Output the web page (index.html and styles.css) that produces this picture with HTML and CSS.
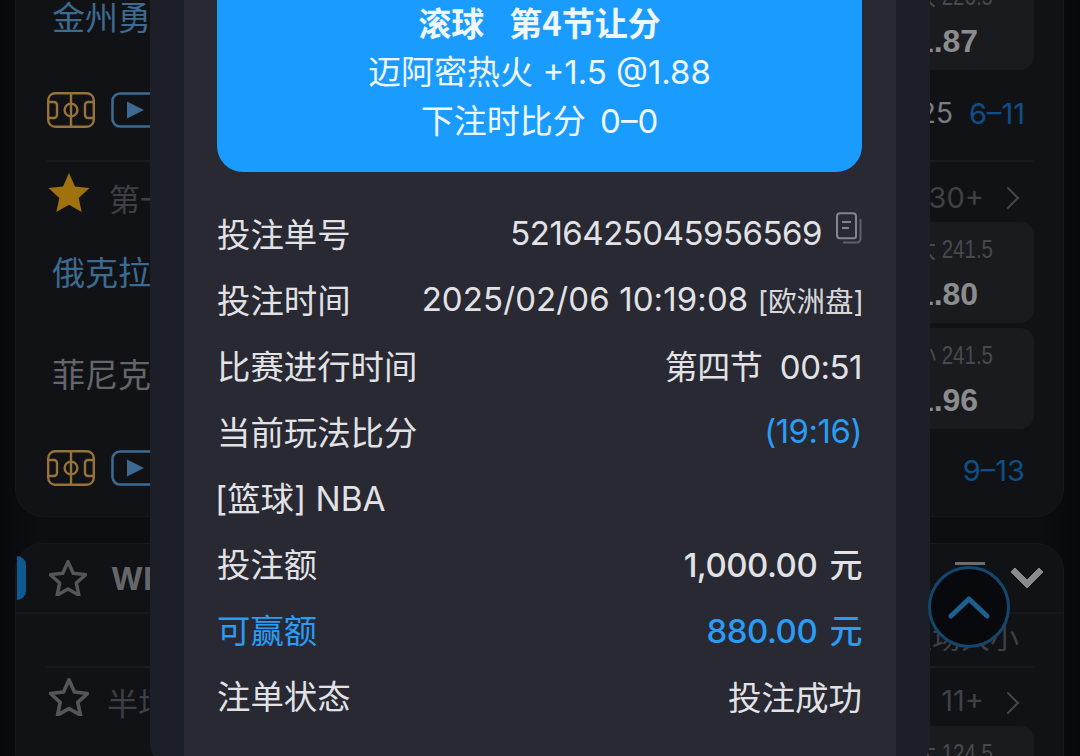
FILE: index.html
```html
<!DOCTYPE html>
<html>
<head>
    <meta charset="utf-8">
    <link rel="stylesheet" href="styles.css">
</head>
<body>
    <svg class="svg-defs" width="0" height="0">
        <defs>
            <symbol id="court" viewBox="0 0 48 36">
                <rect x="1.2" y="1.2" width="45.6" height="33.6" rx="7" fill="none" stroke="currentColor" stroke-width="2.4"/>
                <path d="M24 1v34M1 10h6a3 3 0 0 1 3 3v10a3 3 0 0 1-3 3H1M47 10h-6a3 3 0 0 0-3 3v10a3 3 0 0 0 3 3h6" fill="none" stroke="currentColor" stroke-width="2.4"/>
                <circle cx="24" cy="18" r="6.4" fill="none" stroke="currentColor" stroke-width="2.4"/>
            </symbol>
            <symbol id="play" viewBox="0 0 40 36">
                <path d="M40 1.5H9A7.5 7.5 0 0 0 1.5 9v18A7.5 7.5 0 0 0 9 34.500h31" fill="none" stroke="currentColor" stroke-width="2.6"/>
                <path d="M16 9.500l17 8.500-17 8.500z" fill="currentColor"/>
            </symbol>
            <symbol id="star" viewBox="0 0 44 42">
                <path d="M22 2l6 13.500 14.500 1.600-10.800 9.800 3 14.100L22 33.800 9.300 41l3-14.100L1.500 17.100 16 15.500z" stroke-linejoin="round"/>
            </symbol>
        </defs>
    </svg>

    <div class="page">
        <section class="card card-top">
            <div class="game-row game-row-first">
                <span class="team team-blue">金州勇士</span>
                <div class="odds">
                    <span class="odds-head">大 226.5</span>
                    <span class="odds-value">1.87</span>
                </div>
            </div>
            <div class="meta-row">
                <svg class="icon-court"><use href="#court"/></svg>
                <svg class="icon-play"><use href="#play"/></svg>
                <span class="meta-score">25</span>
                <span class="meta-blue">6–11</span>
            </div>
            <div class="divider"></div>
            <div class="match-head">
                <svg class="star star-gold"><use href="#star"/></svg>
                <span class="match-time">第一节</span>
                <span class="match-more">30+</span>
                <span class="chevron-right"></span>
            </div>
            <div class="game-row">
                <span class="team team-blue">俄克拉荷马城雷霆</span>
                <div class="odds">
                    <span class="odds-head">大 241.5</span>
                    <span class="odds-value">1.80</span>
                </div>
            </div>
            <div class="game-row">
                <span class="team team-grey">菲尼克斯太阳</span>
                <div class="odds">
                    <span class="odds-head">小 241.5</span>
                    <span class="odds-value">1.96</span>
                </div>
            </div>
            <div class="meta-row meta-row-last">
                <svg class="icon-court"><use href="#court"/></svg>
                <svg class="icon-play"><use href="#play"/></svg>
                <span class="meta-blue">9–13</span>
            </div>
        </section>

        <section class="card card-bottom">
            <div class="league-head">
                <span class="league-tab"></span>
                <svg class="star star-line league-star"><use href="#star"/></svg>
                <span class="league-name">WNBA</span>
                <span class="league-mark"></span>
                <span class="chevron-down"></span>
            </div>
            <div class="market-row">主场大小</div>
            <div class="divider"></div>
            <div class="match-head match-head-low">
                <svg class="star star-line"><use href="#star"/></svg>
                <span class="match-time">半场</span>
                <span class="match-more">11+</span>
                <span class="chevron-right"></span>
            </div>
            <div class="game-row">
                <div class="odds">
                    <span class="odds-head">大 124.5</span>
                </div>
            </div>
        </section>
    </div>

    <div class="modal">
        <div class="modal-inner">
            <div class="bet-banner">
                <div class="banner-title">滚球&nbsp; 第4节让分</div>
                <div class="banner-line">迈阿密热火 +1.5 @1.88</div>
                <div class="banner-line banner-score">下注时比分 0–0</div>
            </div>
            <div class="rows">
                <div class="row">
                    <span>投注单号</span>
                    <span class="value"><span>5216425045956569</span><svg class="icon-copy" viewBox="0 0 26 32">
                            <path d="M5 1.200h12a3 3 0 0 1 3 3v20a2 2 0 0 1-2 2H4a3 3 0 0 1-3-3V4.200a3 3 0 0 1 3-3z" fill="none" stroke="#83858c" stroke-width="2"/>
                            <path d="M6 10h9M6 16h7" stroke="#83858c" stroke-width="2"/>
                            <path d="M24.500 7v20a3.500 3.500 0 0 1-3.500 3.500H7" fill="none" stroke="#5f616a" stroke-width="2"/>
                        </svg></span>
                </div>
                <div class="row">
                    <span>投注时间</span>
                    <span class="value value-time">2025/02/06 10:19:08 <small>[欧洲盘]</small></span>
                </div>
                <div class="row">
                    <span>比赛进行时间</span>
                    <span class="value">第四节&nbsp; 00:51</span>
                </div>
                <div class="row">
                    <span>当前玩法比分</span>
                    <span class="value value-blue">(19:16)</span>
                </div>
                <div class="row row-league">
                    <span>[篮球] NBA</span>
                </div>
                <div class="row">
                    <span>投注额</span>
                    <span class="value value-strong">1,000.00 元</span>
                </div>
                <div class="row row-blue">
                    <span>可赢额</span>
                    <span class="value value-strong">880.00 元</span>
                </div>
                <div class="row">
                    <span>注单状态</span>
                    <span class="value value-status">投注成功</span>
                </div>
            </div>
        </div>
    </div>

    <button class="to-top">
        <svg width="44" height="26" viewBox="0 0 44 26"><path d="M4 22L22 5l18 17" fill="none" stroke="#1d5f8f" stroke-width="5" stroke-linecap="round" stroke-linejoin="round"/></svg>
    </button>
</body>
</html>
```

FILE: styles.css
```css
* {
    box-sizing: border-box;
}
html {
    overflow: hidden;
}
body {
    margin: 0;
    height: 756px;
    overflow: hidden;
    position: relative;
    background: linear-gradient(90deg, #08090c 0, #0d0e12 40px, #0d0e12 1040px, #07080b 1080px);
    font-family: Inter, "Noto Sans CJK SC", sans-serif;
}
.svg-defs {
    position: absolute;
}
.page {
    margin-top: -40px;
    padding: 0 16px 0 15px;
}
.card {
    background: #111216;
    border: 1px solid #17181d;
    border-radius: 28px;
    padding: 0 30px 0 31px;
}
.card-top {
    height: 557px;
    margin-bottom: 26px;
}
.card-bottom {
    height: 250px;
}
.game-row {
    display: flex;
    align-items: flex-start;
    justify-content: space-between;
    height: 106px;
}
.game-row-first {
    height: 109px;
    align-items: flex-end;
}
.game-row-first .team {
    margin-bottom: 0;
}
.team {
    align-self: center;
    margin-left: 5px;
    margin-bottom: 8px;
    font-size: 33px;
    white-space: nowrap;
}
.team-blue {
    color: #3d6a8f;
}
.team-grey {
    margin-bottom: 16px;
    color: #64666b;
}
.odds {
    width: 174px;
    height: 101px;
    margin-left: auto;
    margin-right: -1px;
    background: #1a1b1f;
    border-radius: 14px;
    display: flex;
    flex-direction: column;
    align-items: center;
    font-family: "Liberation Sans", "Noto Sans CJK SC", sans-serif;
    white-space: nowrap;
}
.odds-head {
    margin-top: 12px;
    margin-left: 14px;
    font-size: 25px;
    line-height: 30px;
    color: #48494d;
    transform: scaleX(.82);
}
.odds-value {
    margin-top: 10px;
    font-size: 32px;
    line-height: 40px;
    font-weight: 700;
    color: #8c8c8e;
}
.meta-row {
    display: flex;
    align-items: center;
    gap: 16px;
    height: 90px;
    padding-bottom: 10px;
}
.meta-row-last {
    height: 68px;
    padding-bottom: 0;
}
.icon-court {
    width: 48px;
    height: 36px;
    color: #97723a;
}
.icon-play {
    width: 40px;
    height: 36px;
    color: #3d6a90;
}
.meta-score {
    margin-left: auto;
    margin-top: 6px;
    font-size: 28px;
    color: #7d7e81;
}
.meta-blue {
    margin-left: auto;
    margin-top: 6px;
    margin-right: 8px;
    font-size: 29px;
    color: #0f4f85;
}
.meta-row-last .meta-blue {
    margin-top: 4px;
}
.meta-score + .meta-blue {
    margin-left: 0;
}
.divider {
    height: 2px;
    background: #1a1b20;
}
.match-head {
    display: flex;
    align-items: center;
    height: 60px;
}
.match-head-low {
    height: 58px;
}
.match-head-low .match-time {
    margin-top: 8px;
}
.match-head-low .match-more {
    margin-top: 6px;
}
.star {
    width: 44px;
    height: 42px;
    margin-right: 18px;
}
.star-gold {
    fill: #a0720f;
}
.star-line {
    fill: none;
    stroke: #55565a;
    stroke-width: 4;
    width: 40px;
    height: 38px;
    margin-left: 2px;
}
.match-time {
    margin-top: 10px;
    font-size: 31px;
    color: #3f4045;
}
.match-more {
    margin-left: auto;
    margin-top: 10px;
    margin-right: 16px;
    font-size: 29px;
    color: #404145;
}
.chevron-right {
    width: 16px;
    height: 16px;
    margin-top: 12px;
    margin-right: 17px;
    border-top: 2px solid #47484c;
    border-right: 2px solid #47484c;
    transform: rotate(45deg);
}
.league-head {
    position: relative;
    display: flex;
    align-items: center;
    height: 70px;
    margin: 0 -30px 0 -31px;
    padding: 0 35px 0 33px;
    border-bottom: 2px solid #17181d;
}
.league-tab {
    position: absolute;
    left: 1px;
    top: 12px;
    width: 9px;
    height: 44px;
    background: #0f5a92;
    border-radius: 0 10px 10px 0;
}
.league-star {
    width: 38px;
    height: 36px;
    margin-right: 24px;
    margin-left: 0;
}
.league-name {
    font-size: 31px;
    font-weight: 700;
    color: #66676a;
}
.league-mark {
    margin-left: auto;
    margin-right: 30px;
    width: 30px;
    height: 3px;
    margin-top: -30px;
    background: #6b6c70;
}
.chevron-down {
    width: 24px;
    height: 24px;
    margin-top: -12px;
    margin-right: -11px;
    border-right: 7px solid #8a8a8c;
    border-bottom: 7px solid #8a8a8c;
    border-radius: 2px;
    transform: rotate(45deg);
}
.market-row {
    height: 52px;
    padding-right: 14px;
    text-align: right;
    font-size: 29px;
    line-height: 50px;
    color: #3f4045;
}
.modal {
    position: absolute;
    left: 150px;
    top: -40px;
    width: 780px;
    height: 812px;
    padding: 0 34px;
    background: #1c1f27;
    border-radius: 30px;
}
.modal-inner {
    height: 100%;
    padding: 0 34px 0 33px;
    background: #282933;
}
.bet-banner {
    height: 212px;
    padding-top: 37px;
    background: #1a9cff;
    border-radius: 0 0 26px 26px;
    text-align: center;
    color: #eef6ff;
}
.banner-title {
    font-size: 33px;
    font-weight: 700;
    line-height: 51px;
    word-spacing: 5px;
    font-family: "Noto Sans CJK SC", sans-serif;
}
.banner-line {
    font-size: 33px;
    line-height: 49px;
}
.banner-score {
    word-spacing: 5px;
}
.rows {
    padding-top: 27px;
}
.row {
    display: flex;
    align-items: center;
    justify-content: space-between;
    height: 66px;
    font-size: 33.400px;
    color: #e2e2e5;
    white-space: nowrap;
}
.row-league {
    margin-left: -2px;
}
.value {
    display: flex;
    align-items: center;
    margin-top: 2px;
    font-size: 33px;
    letter-spacing: -.5px;
    white-space: pre;
}
.value-time {
    letter-spacing: .1px;
}
.value small {
    margin-right: -2px;
    font-size: 28.500px;
    letter-spacing: 0;
    color: #d8d8db;
}
.value-blue {
    color: #2a9cf4;
}
.value-strong {
    font-weight: 500;
    word-spacing: 4px;
}
.value-status {
    font-size: 33.500px;
    letter-spacing: 0;
}
.row-blue {
    color: #2a9cf4;
}
.icon-copy {
    width: 26px;
    height: 32px;
    margin: -10px 0 0 14px;
}
.to-top {
    position: absolute;
    left: 928px;
    top: 566px;
    width: 82px;
    height: 82px;
    padding: 0;
    display: flex;
    align-items: center;
    justify-content: center;
    background: #08090c;
    border: 3px solid #14476e;
    border-radius: 50%;
}
```
